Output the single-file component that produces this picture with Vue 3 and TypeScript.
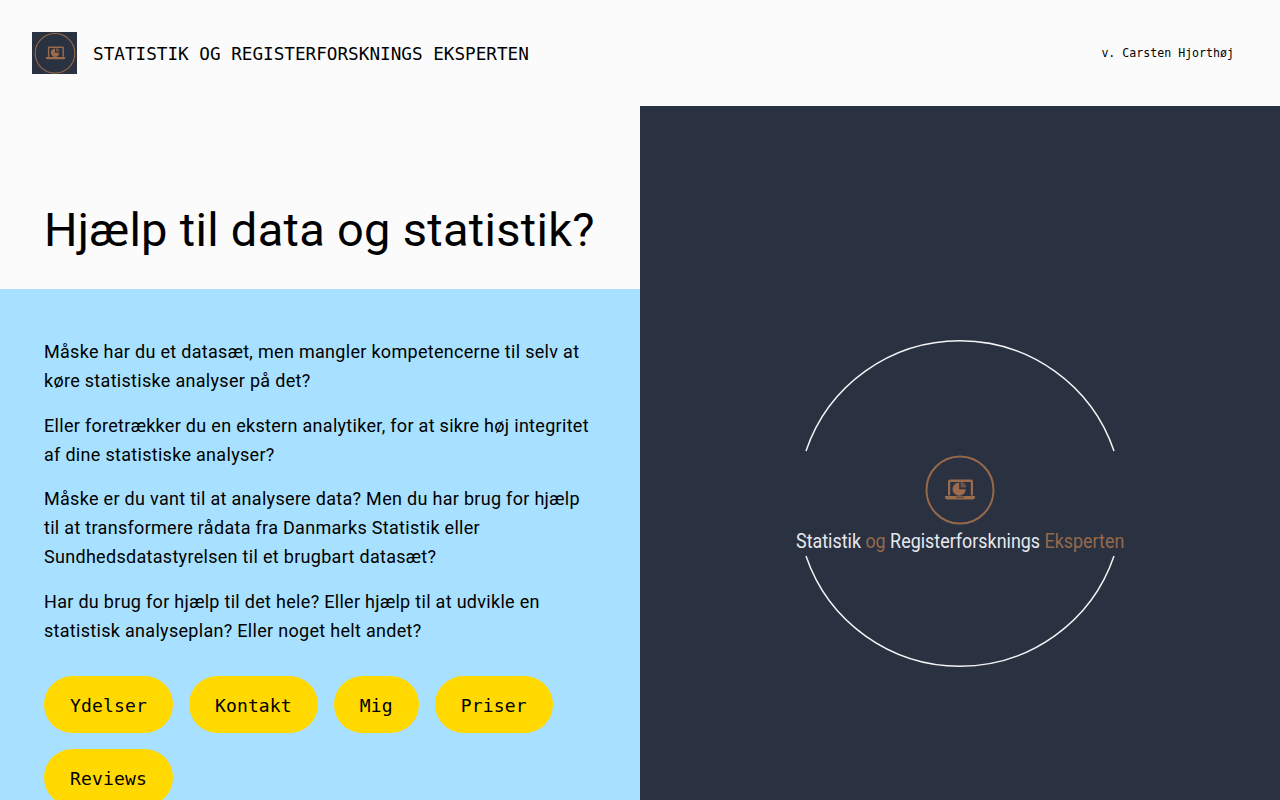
<script setup lang="ts">
const links = ["Ydelser", "Kontakt", "Mig", "Priser", "Reviews"];

const paragraphs = [
  "Måske har du et datasæt, men mangler kompetencerne til selv at køre statistiske analyser på det?",
  "Eller foretrækker du en ekstern analytiker, for at sikre høj integritet af dine statistiske analyser?",
  "Måske er du vant til at analysere data? Men du har brug for hjælp til at transformere rådata fra Danmarks Statistik eller Sundhedsdatastyrelsen til et brugbart datasæt?",
  "Har du brug for hjælp til det hele? Eller hjælp til at udvikle en statistisk analyseplan? Eller noget helt andet?",
];
</script>

<template>
  <div class="page">
    <header class="topbar">
      <div class="brand">
        <svg class="brand-logo" width="45" height="42" viewBox="0 0 45 42">
          <rect width="45" height="42" fill="#2a3140" />
          <circle cx="23" cy="21.3" r="19.8" fill="none" stroke="#96694b" stroke-width="1.1" />
          <g transform="translate(14 14.5) scale(0.64) translate(-945 -479.5)">
            <path
              fill="#9a6b4c"
              d="M948 481.5a2 2 0 0 1 2-2h21a2 2 0 0 1 2 2v14h-2.2v-13.6h-20.6v13.6H948zM945 496h30v1.3a2.2 2.2 0 0 1-2.2 2.2h-25.6a2.2 2.2 0 0 1-2.2-2.2z"
            />
            <path fill="#9a6b4c" d="M959.2 482.6v6.6h6.6a6.6 6.6 0 1 1-6.6-6.6z" />
            <path fill="#9a6b4c" opacity="0.6" d="M960.6 481.8a5.6 5.6 0 0 1 5.6 5.6h-5.6z" />
          </g>
        </svg>
        <span class="brand-name">STATISTIK OG REGISTERFORSKNINGS EKSPERTEN</span>
      </div>
      <span class="byline">v. Carsten Hjorthøj</span>
    </header>

    <main class="columns">
      <section class="left">
        <div class="hero">
          <h1>Hjælp til data og statistik?</h1>
        </div>
        <div class="intro">
          <p v-for="text in paragraphs" :key="text">{{ text }}</p>
          <nav class="buttons">
            <a v-for="link in links" :key="link" class="pill" href="#">{{ link }}</a>
          </nav>
        </div>
      </section>

      <section class="right">
        <svg class="ring-logo" width="360" height="340" viewBox="780 335 360 340">
          <path class="ring" d="M806 451A162.7 162.7 0 0 1 1114 451" />
          <path class="ring" d="M806 556A162.7 162.7 0 0 0 1114 556" />
          <circle cx="960" cy="490" r="33.5" fill="none" stroke="#96694b" stroke-width="2" />
          <path
            fill="#9a6b4c"
            d="M948 481.5a2 2 0 0 1 2-2h21a2 2 0 0 1 2 2v14h-2.2v-13.6h-20.6v13.6H948zM945 496h30v1.3a2.2 2.2 0 0 1-2.2 2.2h-25.6a2.2 2.2 0 0 1-2.2-2.2z"
          />
          <path fill="#2a3140" d="M956 496.8h8v.8h-8z" />
          <path fill="#9a6b4c" d="M959.2 482.6v6.6h6.6a6.6 6.6 0 1 1-6.6-6.6z" />
          <path fill="#9a6b4c" opacity="0.6" d="M960.6 481.8a5.6 5.6 0 0 1 5.6 5.6h-5.6z" />
          <text class="logo-text" transform="translate(796 548) scale(0.896 1)" xml:space="preserve">Statistik <tspan class="accent">og</tspan> Registerforsknings <tspan class="accent">Eksperten</tspan></text>
        </svg>
      </section>
    </main>
  </div>
</template>

<style scoped>
.page {
  width: 1280px;
  background: #fbfbfb;
  color: #000;
}

.topbar {
  height: 106px;
  display: flex;
  align-items: center;
  justify-content: space-between;
  padding: 0 46px 0 32px;
  box-sizing: border-box;
}

.brand {
  display: flex;
  align-items: center;
  gap: 16px;
}

.brand-logo {
  display: block;
}

.brand-name {
  font-family: "DejaVu Sans Mono", monospace;
  font-size: 17.66px;
  position: relative;
  top: 1px;
}

.byline {
  font-family: "DejaVu Sans Mono", monospace;
  font-size: 11.6px;
}

.columns {
  display: grid;
  grid-template-columns: 640px 640px;
}

.hero {
  height: 183px;
  display: flex;
  align-items: flex-end;
  padding: 0 44px 31px;
  box-sizing: border-box;
}

h1 {
  margin: 0;
  font-family: Roboto, sans-serif;
  font-size: 47px;
  font-weight: 400;
  line-height: 1.2;
  white-space: nowrap;
  letter-spacing: 0.3px;
}

.intro {
  background: #a8e0ff;
  padding: 48px 44px 99px;
  font-family: Roboto, sans-serif;
  font-size: 18px;
  line-height: 29px;
  letter-spacing: 0.3px;
}

.intro p {
  margin: 0 0 15.6px;
}

.buttons {
  display: flex;
  flex-wrap: wrap;
  gap: 16px;
  margin-top: 31px;
}

.pill {
  height: 57px;
  padding: 3px 26px 0;
  box-sizing: border-box;
  border-radius: 29px;
  display: flex;
  align-items: center;
  background: #ffd900;
  color: #000;
  text-decoration: none;
  font-family: "DejaVu Sans Mono", monospace;
  font-size: 18px;
  letter-spacing: 0.15px;
}

.right {
  background: #2a3140;
  display: flex;
  align-items: center;
  justify-content: center;
}

.ring-logo {
  display: block;
}

.ring {
  fill: none;
  stroke: #f4f4f6;
  stroke-width: 1.5;
}

.logo-text {
  font-family: Roboto, sans-serif;
  font-size: 20px;
  font-weight: 400;
  fill: #e6e8ee;
}

.accent {
  fill: #96694b;
}
</style>

<style>
body {
  background: #fbfbfb;
}
</style>
